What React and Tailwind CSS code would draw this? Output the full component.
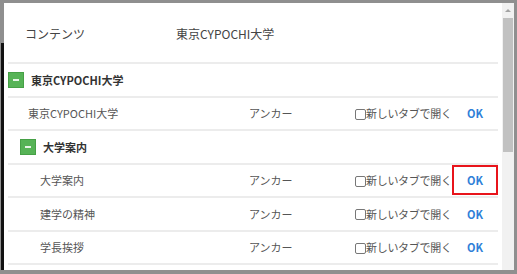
const rows = [
  { type: 'group', level: 0, label: '東京CYPOCHI大学' },
  { type: 'leaf', level: 0, label: '東京CYPOCHI大学' },
  { type: 'group', level: 1, label: '大学案内' },
  { type: 'leaf', level: 1, label: '大学案内', active: true },
  { type: 'leaf', level: 1, label: '建学の精神' },
  { type: 'leaf', level: 1, label: '学長挨拶' },
];

function MinusBox() {
  return (
    <span className="flex h-[16px] w-[16px] items-center justify-center bg-[#56b356] shadow-[inset_0_0_0_1px_#46a046]">
      <span className="h-[2px] w-[6px] bg-[#e6f4e6]" />
    </span>
  );
}

function GroupRow({ row }) {
  return (
    <div
      className={
        'flex h-[33.5px] items-center gap-[7px] border-b-2 border-[#ececec] ' +
        (row.level === 1 ? 'pl-[12px]' : 'pl-0')
      }
    >
      <MinusBox />
      <span className="text-[11px] font-bold text-[#333]">{row.label}</span>
    </div>
  );
}

function LeafRow({ row }) {
  return (
    <div className="grid h-[33.5px] grid-cols-[241px_106px_97px_46px] items-center whitespace-nowrap border-b-2 border-[#ececec] text-[11px] text-[#555]">
      <span className={row.level === 1 ? 'pl-[32px]' : 'pl-[20px]'}>{row.label}</span>
      <span>アンカー</span>
      <span className="flex items-center">
        <span className="mt-[2px] h-[11px] w-[11px] shrink-0 rounded-[2px] border border-[#777] bg-white" />
        <span className="tracking-[-0.3px]">新しいタブで開く</span>
      </span>
      <span
        className={
          'flex h-[30px] items-center justify-center border-2 text-[11px] font-bold text-[#2f80d8] ' +
          (row.active ? 'border-[#e8141b]' : 'border-transparent')
        }
      >
        OK
      </span>
    </div>
  );
}

export default function App() {
  return (
    <div
      className="flex h-[274px] w-[517px] bg-[#8f8f8f] pt-[3px] pb-[4px] pr-[3px]"
      style={{ fontFamily: '"Noto Sans CJK JP", "Noto Sans", sans-serif' }}
    >
      <div className="flex w-[5px] flex-col">
        <div className="h-[40px]" />
        <div className="ml-[1px] w-[3px] flex-1 bg-[#111]" />
      </div>
      <div className="flex flex-1 bg-white">
        <div className="flex-1 overflow-hidden px-[4px]">
          <div className="flex h-[61px] items-center border-b-2 border-[#ececec] pt-[3px] text-[12px] text-[#444]">
            <span className="w-[168px] pl-[17px]">コンテンツ</span>
            <span>東京CYPOCHI大学</span>
          </div>
          {rows.map((row, i) =>
            row.type === 'group' ? <GroupRow key={i} row={row} /> : <LeafRow key={i} row={row} />
          )}
        </div>
        <div className="flex w-[12px] flex-col bg-[#f1f1f1]">
          <div className="flex h-[15px] items-center justify-center">
            <span className="h-0 w-0 border-x-[3px] border-b-[3px] border-x-transparent border-b-[#a3a3a3]" />
          </div>
          <div className="mx-[1px] h-[134px] bg-[#c1c1c1]" />
        </div>
      </div>
    </div>
  );
}
